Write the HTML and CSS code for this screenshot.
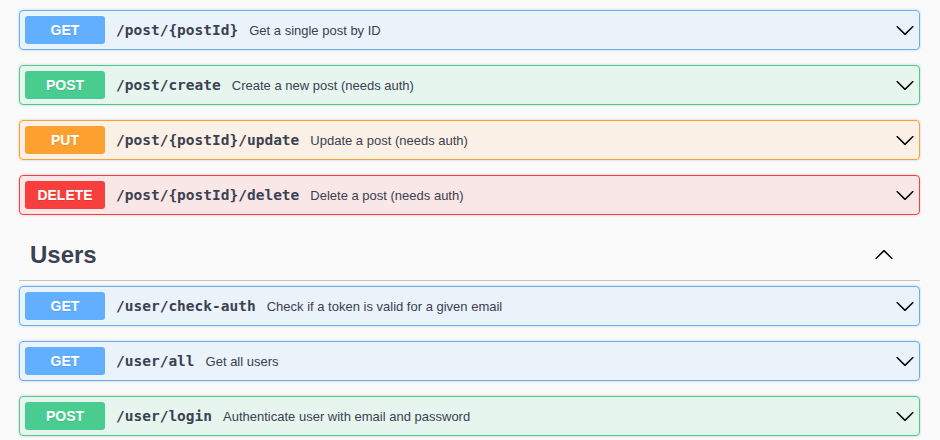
FILE: index.html
```html
<!DOCTYPE html>
<html>
<head>
<meta charset="utf-8">
<link rel="stylesheet" href="styles.css">
</head>
<body>
<div class="wrapper">
  <div class="opblock get">
    <div class="summary">
      <span class="method">GET</span>
      <span class="path">/post/{postId}</span>
      <span class="desc">Get a single post by ID</span>
      <svg class="arrow" width="20" height="20" viewBox="0 0 20 20"><path d="M17.418 6.109c.272-.268.709-.268.979 0s.271.701 0 .969l-7.908 7.83c-.27.268-.707.268-.979 0l-7.908-7.83c-.27-.268-.27-.701 0-.969.271-.268.709-.268.979 0L10 13.25l7.418-7.141z"/></svg>
    </div>
  </div>
  <div class="opblock post">
    <div class="summary">
      <span class="method">POST</span>
      <span class="path">/post/create</span>
      <span class="desc">Create a new post (needs auth)</span>
      <svg class="arrow" width="20" height="20" viewBox="0 0 20 20"><path d="M17.418 6.109c.272-.268.709-.268.979 0s.271.701 0 .969l-7.908 7.83c-.27.268-.707.268-.979 0l-7.908-7.83c-.27-.268-.27-.701 0-.969.271-.268.709-.268.979 0L10 13.25l7.418-7.141z"/></svg>
    </div>
  </div>
  <div class="opblock put">
    <div class="summary">
      <span class="method">PUT</span>
      <span class="path">/post/{postId}/update</span>
      <span class="desc">Update a post (needs auth)</span>
      <svg class="arrow" width="20" height="20" viewBox="0 0 20 20"><path d="M17.418 6.109c.272-.268.709-.268.979 0s.271.701 0 .969l-7.908 7.83c-.27.268-.707.268-.979 0l-7.908-7.83c-.27-.268-.27-.701 0-.969.271-.268.709-.268.979 0L10 13.25l7.418-7.141z"/></svg>
    </div>
  </div>
  <div class="opblock delete">
    <div class="summary">
      <span class="method">DELETE</span>
      <span class="path">/post/{postId}/delete</span>
      <span class="desc">Delete a post (needs auth)</span>
      <svg class="arrow" width="20" height="20" viewBox="0 0 20 20"><path d="M17.418 6.109c.272-.268.709-.268.979 0s.271.701 0 .969l-7.908 7.83c-.27.268-.707.268-.979 0l-7.908-7.83c-.27-.268-.27-.701 0-.969.271-.268.709-.268.979 0L10 13.25l7.418-7.141z"/></svg>
    </div>
  </div>

  <h3 class="tag">
    <span class="tag-name">Users</span>
    <svg class="tag-arrow" width="20" height="20" viewBox="0 0 20 20"><path transform="rotate(180 10 10)" d="M17.418 6.109c.272-.268.709-.268.979 0s.271.701 0 .969l-7.908 7.83c-.27.268-.707.268-.979 0l-7.908-7.83c-.27-.268-.27-.701 0-.969.271-.268.709-.268.979 0L10 13.25l7.418-7.141z"/></svg>
  </h3>

  <div class="opblock get">
    <div class="summary">
      <span class="method">GET</span>
      <span class="path">/user/check-auth</span>
      <span class="desc">Check if a token is valid for a given email</span>
      <svg class="arrow" width="20" height="20" viewBox="0 0 20 20"><path d="M17.418 6.109c.272-.268.709-.268.979 0s.271.701 0 .969l-7.908 7.83c-.27.268-.707.268-.979 0l-7.908-7.83c-.27-.268-.27-.701 0-.969.271-.268.709-.268.979 0L10 13.25l7.418-7.141z"/></svg>
    </div>
  </div>
  <div class="opblock get">
    <div class="summary">
      <span class="method">GET</span>
      <span class="path">/user/all</span>
      <span class="desc">Get all users</span>
      <svg class="arrow" width="20" height="20" viewBox="0 0 20 20"><path d="M17.418 6.109c.272-.268.709-.268.979 0s.271.701 0 .969l-7.908 7.83c-.27.268-.707.268-.979 0l-7.908-7.83c-.27-.268-.27-.701 0-.969.271-.268.709-.268.979 0L10 13.25l7.418-7.141z"/></svg>
    </div>
  </div>
  <div class="opblock post">
    <div class="summary">
      <span class="method">POST</span>
      <span class="path">/user/login</span>
      <span class="desc">Authenticate user with email and password</span>
      <svg class="arrow" width="20" height="20" viewBox="0 0 20 20"><path d="M17.418 6.109c.272-.268.709-.268.979 0s.271.701 0 .969l-7.908 7.83c-.27.268-.707.268-.979 0l-7.908-7.83c-.27-.268-.27-.701 0-.969.271-.268.709-.268.979 0L10 13.25l7.418-7.141z"/></svg>
    </div>
  </div>
</div>
</body>
</html>
```

FILE: styles.css
```css
html, body {
  margin: 0;
  padding: 0;
  background: #fafafa;
  font-family: "Liberation Sans", Arial, sans-serif;
  color: #3b4151;
}

.wrapper {
  padding: 10px 20px 0 19px;
}

.opblock {
  border: 1px solid #000;
  border-radius: 4px;
  box-shadow: 0 0 3px rgba(0, 0, 0, .19);
  margin: 0 0 15px;
}

.summary {
  display: flex;
  align-items: center;
  padding: 5px;
  height: 28px;
}

.method {
  min-width: 80px;
  height: 28px;
  display: flex;
  align-items: center;
  justify-content: center;
  border-radius: 3px;
  color: #fff;
  font-size: 14px;
  font-weight: 700;
  text-shadow: 0 1px 0 rgba(0, 0, 0, .1);
}

.path {
  font-family: "DejaVu Sans Mono", monospace;
  font-weight: 700;
  font-size: 14.5px;
  color: #3b4151;
  padding: 0 11px 0 11px;
  white-space: nowrap;
}

.desc {
  font-size: 13px;
  color: #3b4151;
}

.arrow {
  margin-left: auto;
  margin-right: -1px;
  flex: none;
}

.get { background: rgba(97, 175, 254, .1); border-color: #61affe; }
.get .method { background: #61affe; }
.post { background: rgba(73, 204, 144, .1); border-color: #49cc90; }
.post .method { background: #49cc90; }
.put { background: rgba(252, 161, 48, .1); border-color: #fca130; }
.put .method { background: #fca130; }
.delete { background: rgba(249, 62, 62, .1); border-color: #f93e3e; }
.delete .method { background: #f93e3e; }

.tag {
  display: flex;
  align-items: center;
  margin: 0 0 5px;
  padding: 10px 26px 10px 11px;
  height: 30px;
  border-bottom: 1px solid rgba(59, 65, 81, .3);
  font-size: 24px;
  font-weight: 700;
  color: #3b4151;
}

.tag-arrow {
  margin-left: auto;
  flex: none;
}
```
